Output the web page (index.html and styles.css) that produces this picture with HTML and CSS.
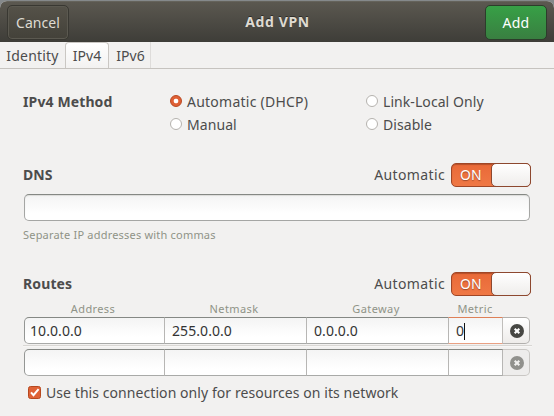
FILE: index.html
```html
<!DOCTYPE html>
<html lang="en">
<head>
<meta charset="utf-8">
<title>Add VPN</title>
<link rel="stylesheet" href="styles.css">
</head>
<body>
<div class="dialog">
  <header class="titlebar">
    <button class="btn cancel">Cancel</button>
    <h1>Add VPN</h1>
    <button class="btn add">Add</button>
  </header>
  <nav class="tabs">
    <div class="tab first">Identity</div>
    <div class="tab active">IPv4</div>
    <div class="tab last">IPv6</div>
  </nav>
  <main>
    <section class="method">
      <h2>IPv4 Method</h2>
      <div class="option"><i class="radio on"></i><span class="wide">Automatic (DHCP)</span></div>
      <div class="option"><i class="radio"></i><span>Link-Local Only</span></div>
      <div class="option manual"><i class="radio"></i><span>Manual</span></div>
      <div class="option"><i class="radio"></i><span>Disable</span></div>
    </section>
    <section class="dns">
      <div class="heading"><h2>DNS</h2><span class="auto">Automatic</span><div class="switch"><span class="on-label">ON</span><i class="knob"></i></div></div>
      <div class="entry"></div>
      <p class="hint">Separate IP addresses with commas</p>
    </section>
    <section class="routes">
      <div class="heading"><h2>Routes</h2><span class="auto">Automatic</span><div class="switch"><span class="on-label">ON</span><i class="knob"></i></div></div>
      <div class="columns"><span>Address</span><span>Netmask</span><span>Gateway</span><span>Metric</span></div>
      <div class="row">
        <div class="cell left">10.0.0.0</div><div class="cell">255.0.0.0</div><div class="cell">0.0.0.0</div><div class="cell focus">0<i class="caret"></i></div>
        <button class="remove"><svg width="14" height="14" viewBox="0 0 14 14"><circle cx="7" cy="7" r="7" fill="#474743"/><path d="M4.7 4.7l4.6 4.6M9.3 4.7L4.7 9.3" stroke="#fff" stroke-width="2.1"/></svg></button>
      </div>
      <div class="rule"></div>
      <div class="row">
        <div class="cell left"></div><div class="cell"></div><div class="cell"></div><div class="cell end"></div>
        <button class="remove disabled"><svg width="14" height="14" viewBox="0 0 14 14"><circle cx="7" cy="7" r="7" fill="#91918d"/><path d="M4.7 4.7l4.6 4.6M9.3 4.7L4.7 9.3" stroke="#f1f0ef" stroke-width="2.1"/></svg></button>
      </div>
      <div class="check">
        <svg width="13" height="13" viewBox="0 0 13 13"><rect x=".5" y=".5" width="12" height="12" rx="2" fill="#df6236" stroke="#b6481f"/><path d="M3 6.4l2.5 2.8L10.6 3.2" fill="none" stroke="#fff" stroke-width="2"/></svg>
        <span>Use this connection only for resources on its network</span>
      </div>
    </section>
  </main>
</div>
</body>
</html>
```

FILE: styles.css
```css
* { box-sizing: border-box; }
body { margin: 0; background: #85898b; font: 14px/20px "Noto Sans", "Open Sans", sans-serif; letter-spacing: .07px; color: #4c4c4c; overflow: hidden; }
h1, h2, p { margin: 0; font-size: 14px; line-height: 20px; }
h2 { letter-spacing: .12px; }
button { font: inherit; letter-spacing: inherit; padding: 0; }
span { white-space: nowrap; }
.dialog { height: 415px; margin-top: 1px; background: #f2f1f0; border-radius: 7px 7px 0 0; overflow: hidden; }
.titlebar { height: 41px; display: grid; grid-template-columns: 62px 1fr 62px; padding: 3px 7px 2px; background: linear-gradient(#5b5850, #3e3d38); border-top: 1px solid #65635b; align-items: start; }
.titlebar h1 { padding-left: 1px; text-align: center; line-height: 34px; color: #dfdbd2; text-shadow: 0 -1px #2e2d29; letter-spacing: .6px; }
.btn { width: 62px; height: 35px; border-radius: 5px; border: 1px solid #393832; color: #dfdbd2; line-height: 33px; }
.cancel { background: linear-gradient(#555249, #434139); box-shadow: inset 0 0 0 1px #5b5950; }
.add { color: #fff; background: linear-gradient(#37a046, #397f41); border-color: #2c3d2b; letter-spacing: .3px; }
.tabs { height: 27px; display: flex; border-bottom: 1px solid #c6c3bf; }
.tab { text-align: center; line-height: 27px; }
.first { width: 65px; letter-spacing: .2px; }
.active { width: 44px; height: 26px; background: linear-gradient(#fff, #f3f2f1); border: 1px solid #cac7c3; border-bottom: 0; border-radius: 4px 4px 0 0; line-height: 25px; }
.last { width: 42px; padding-left: 2px; border-right: 1px solid #dedcda; }
main { padding: 21px 23px 0; }
.method { height: 73px; display: grid; grid-template-columns: 147px 196px 1fr; grid-template-rows: 23px 23px; align-items: center; }
.option { display: flex; align-items: center; gap: 5px; }
.wide { letter-spacing: .24px; }
.manual { grid-column: 2; }
.radio { width: 12px; height: 12px; margin-bottom: 1px; border: 1px solid #b5b2ae; border-radius: 50%; background: #fff; }
.radio.on { border-color: #b9461f; background: radial-gradient(circle, #fff 0 2px, #df6035 2.7px); }
.heading { height: 24px; display: flex; align-items: center; }
.heading h2 { flex: 1; line-height: 24px; height: 24px; }
.auto { margin-right: 6px; letter-spacing: .38px; line-height: 24px; height: 24px; }
.switch { width: 80px; height: 24px; border: 1px solid #a04626; border-radius: 5px; background: linear-gradient(#e96937, #ef7845); box-shadow: inset 0 1px 1px #b64f29; display: flex; justify-content: space-between; color: #fff; line-height: 22px; }
.on-label { padding-left: 8px; text-shadow: 0 1px 1px #9f4a2b; }
.knob { width: 40px; height: 24px; margin: -1px; border: 1px solid #8d482f; border-radius: 5px; background: linear-gradient(#fff, #efedeb); }
.dns { height: 109px; }
.entry { height: 27px; margin: 7px 1px 0 1px; border: 1px solid #a5a6a4; border-top-color: #858884; border-radius: 5px; background: linear-gradient(#f4f4f4, #fff 75%); box-shadow: inset 0 1px 1px #dcdcda; }
.hint, .columns { font-size: 11px; letter-spacing: .2px; color: #8f9387; }
.hint { line-height: 16px; margin-top: 6px; }
.columns { display: grid; grid-template-columns: 140px 142px 142px 56px; margin-top: 5px; height: 16px; line-height: 16px; text-align: center; letter-spacing: .4px; }
.row { display: grid; grid-template-columns: 140px 142px 142px 55px 27px; height: 27px; margin-left: 1px; }
.cell { height: 27px; padding-left: 7px; line-height: 25px; color: #333; border: 1px solid #a9aaa8; border-width: 1px 0; border-top-color: #858884; background: linear-gradient(#f4f4f4, #fff 75%); border-left: 1px solid #b7b6b4; }
.left { padding-left: 5px; border-left-color: #949694; border-radius: 5px 0 0 5px; }
.focus { border-top-color: #de8058; border-bottom-color: #e9a184; border-right: 1px solid #c0bebb; }
.end { border-right: 1px solid #b7b6b4; }
.caret { display: inline-block; width: 1px; height: 17px; background: #111; vertical-align: -4px; }
.remove { height: 27px; border: 1px solid #b2b0ad; border-left: 0; border-radius: 0 5px 5px 0; background: linear-gradient(#fff, #eeecea); display: grid; place-items: center; padding-left: 2px; }
.disabled { border-color: #c9c7c4; background: #eeedec; }
.rule { height: 2px; margin: 1px -1px 2px 0; border-top: 1px solid #d9d7d4; background: #f7f6f5; }
.check { display: flex; align-items: center; gap: 5px; height: 20px; margin: 7px 0 0 5px; }
.check svg { margin-top: -1px; }
```
